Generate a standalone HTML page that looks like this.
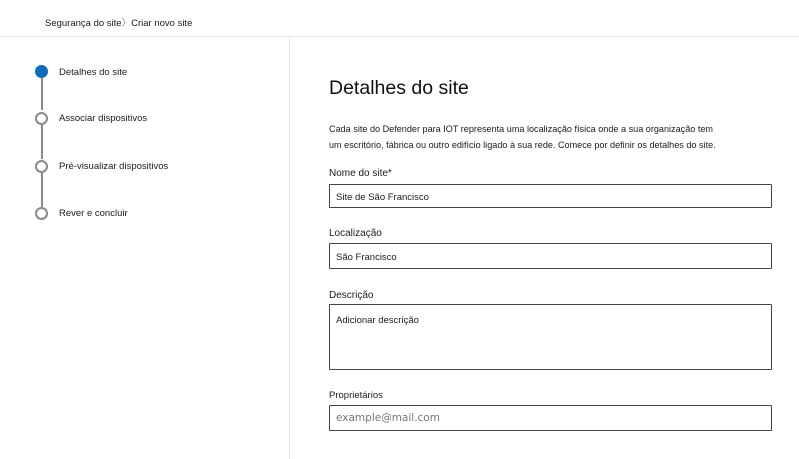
<!DOCTYPE html>
<html><head><meta charset="utf-8"><style>
*{margin:0;padding:0;box-sizing:border-box}
body{width:799px;height:459px;background:#fff;font-family:"Liberation Sans",sans-serif;color:#1b1b1b;position:relative;overflow:hidden}
.a{position:absolute;white-space:nowrap}
.hdr{position:absolute;left:0;top:0;width:799px;height:37px;border-bottom:1px solid #e6e6e6}
.side{position:absolute;left:289px;top:37px;width:1px;height:422px;background:#e6e6e6}
.c{position:absolute;left:35px;width:13px;height:13px;border-radius:50%;border:2px solid #8a8a8a;background:#fff}
.ln{position:absolute;left:40.5px;width:2px;background:#8a8a8a}
.step{font-size:9.5px;left:59px}
.lbl{font-size:10px;left:329px}
.box{position:absolute;left:329px;width:443px;border:1px solid #444;border-radius:1px;font-size:9.5px;padding-left:6px}
</style></head><body>
<div class="hdr"></div>
<div class="a" style="left:45px;top:15px;font-size:9.5px">Segurança do site<span style="color:#777">〉</span>Criar novo site</div>
<div class="side"></div>
<div class="ln" style="top:78px;height:32px"></div>
<div class="ln" style="top:125px;height:34px"></div>
<div class="ln" style="top:173px;height:34px"></div>
<div class="c" style="top:65px;background:#0f6cbd;border-color:#0f6cbd"></div>
<div class="c" style="top:112px"></div>
<div class="c" style="top:160px"></div>
<div class="c" style="top:207px"></div>
<div class="a step" style="top:67px">Detalhes do site</div>
<div class="a step" style="top:113px">Associar dispositivos</div>
<div class="a step" style="top:161px">Pré-visualizar dispositivos</div>
<div class="a step" style="top:208px">Rever e concluir</div>

<div class="a" style="left:329px;top:77px;font-size:19.5px;color:#111">Detalhes do site</div>
<div class="a" style="left:329px;top:121px;font-size:9.1px;line-height:16px">Cada site do Defender para IOT representa uma localização física onde a sua organização tem<br>um escritório, fábrica ou outro edifício ligado à sua rede. Comece por definir os detalhes do site.</div>
<div class="a lbl" style="top:168px">Nome do site*</div>
<div class="box" style="top:184px;height:24px;line-height:25px">Site de São Francisco</div>
<div class="a lbl" style="top:228px">Localização</div>
<div class="box" style="top:243px;height:26px;line-height:27px">São Francisco</div>
<div class="a lbl" style="top:290px">Descrição</div>
<div class="box" style="top:304px;height:66px;padding-top:10px">Adicionar descrição</div>
<div class="a lbl" style="top:390px;font-size:9.5px">Proprietários</div>
<div class="box" style="top:405px;height:26px;line-height:24px;color:#777;font-family:'DejaVu Sans',sans-serif;font-size:10.5px">example@mail.com</div>
</body></html>
